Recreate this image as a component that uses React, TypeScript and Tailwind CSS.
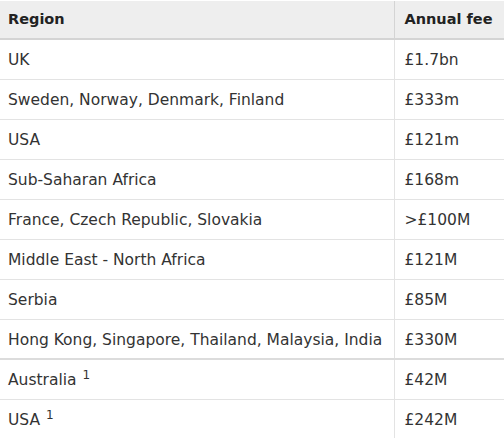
const ROWS: { region: string; fee: string; note?: boolean; thick?: boolean }[] = [
  { region: "UK", fee: "£1.7bn" },
  { region: "Sweden, Norway, Denmark, Finland", fee: "£333m" },
  { region: "USA", fee: "£121m" },
  { region: "Sub-Saharan Africa", fee: "£168m" },
  { region: "France, Czech Republic, Slovakia", fee: ">£100M" },
  { region: "Middle East - North Africa", fee: "£121M" },
  { region: "Serbia", fee: "£85M" },
  { region: "Hong Kong, Singapore, Thailand, Malaysia, India", fee: "£330M", thick: true },
  { region: "Australia", fee: "£42M", note: true },
  { region: "USA", fee: "£242M", note: true },
];

export default function App() {
  return (
    <div className="w-[504px] h-[438px] overflow-hidden bg-white pt-[1px] font-['DejaVu_Sans',Verdana,sans-serif] text-[15.5px] text-[#333]">
      <table className="w-full border-collapse table-fixed">
        <thead>
          <tr className="bg-[#eeeeee] border-b-2 border-[#d4d4d4]">
            <th className="h-[38px] w-[394px] px-2 text-left text-[14.5px] font-bold text-[#222] border-r border-[#d4d4d4] whitespace-nowrap">Region</th>
            <th className="h-[38px] px-2.5 text-left text-[14.5px] font-bold text-[#222] whitespace-nowrap">Annual fee</th>
          </tr>
        </thead>
        <tbody>
          {ROWS.map((r, i) => (
            <tr
              key={i}
              className={r.thick ? "border-b-2 border-[#dcdcdc]" : "border-b border-[#e3e3e3]"}
            >
              <td className="h-[40px] px-2 pt-[3px] border-r border-[#e3e3e3] whitespace-nowrap">
                {r.region}
                {r.note && <sup className="ml-1.5 text-[12px]">1</sup>}
              </td>
              <td className="h-[40px] px-2.5 pt-[3px] whitespace-nowrap">{r.fee}</td>
            </tr>
          ))}
        </tbody>
      </table>
    </div>
  );
}
